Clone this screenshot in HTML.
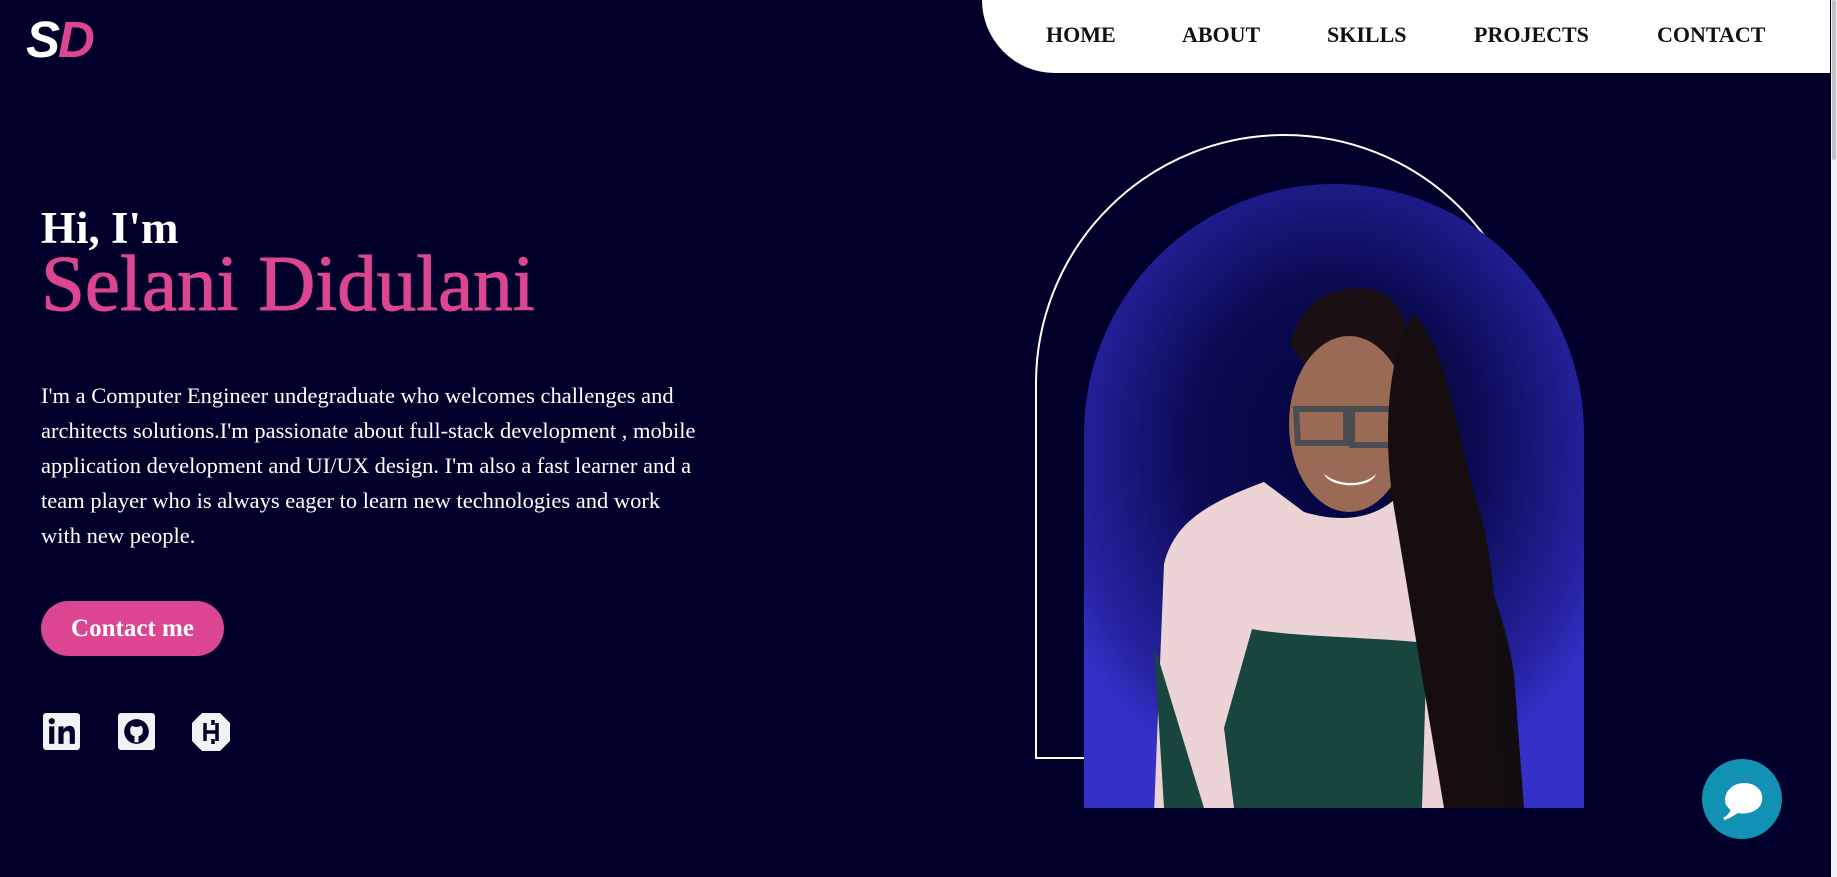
<!DOCTYPE html>
<html><head><meta charset="utf-8"><style>
*{margin:0;padding:0;box-sizing:border-box}
html,body{width:1837px;height:877px;overflow:hidden;background:#00002a;font-family:"Liberation Serif",serif}
.logo{position:absolute;left:26px;top:10px;font-family:"Liberation Sans",sans-serif;font-style:italic;font-weight:bold;font-size:51px;letter-spacing:-2px}
.nav{position:absolute;left:982px;top:0;width:848px;height:73px;background:#fff;border-bottom-left-radius:75px}
.nav span{position:absolute;top:22px;font-weight:bold;font-size:22px;color:#111}
.sb{position:absolute;left:1831px;top:0;width:6px;height:877px;background:#f1f1f1}
.sb i{position:absolute;left:1px;top:0;width:4px;height:160px;background:#c1c1c1;border-radius:2px}
h2{position:absolute;left:41px;top:202px;color:#fff;font-size:45px;font-weight:bold}
h1{position:absolute;left:41px;top:240px;color:#dc4590;font-size:79px;font-weight:normal;white-space:nowrap;-webkit-text-stroke:1px #dc4590}
p{position:absolute;left:41px;top:378px;color:#fff;font-size:22.5px;line-height:35px;white-space:nowrap}
.btn{position:absolute;left:41px;top:601px;width:183px;height:55px;border-radius:28px;background:#dc4590;color:#fff;font-weight:bold;font-size:25px;text-align:center;line-height:55px}
.arch{position:absolute;left:1035px;top:134px;width:499px;height:625px;border:2px solid #fff;border-radius:250px 250px 0 0}
.photo{position:absolute;left:1084px;top:184px;width:500px;height:624px;border-radius:250px 250px 0 0;overflow:hidden;background:radial-gradient(ellipse 62% 58% at 50% 42%,#03043e 0%,#0a0a50 45%,#2622a0 85%,#3431c8 100%)}
.chat{position:absolute;left:1702px;top:759px;width:80px;height:80px;border-radius:50%;background:#1191b4}
</style></head><body>
<div class="logo"><span style="color:#fff">S</span><span style="color:#dc4590">D</span></div>
<div class="nav">
<span style="left:64px">HOME</span><span style="left:200px">ABOUT</span><span style="left:345px">SKILLS</span><span style="left:492px">PROJECTS</span><span style="left:675px">CONTACT</span>
</div>
<div class="sb"><i></i></div>
<h2>Hi, I'm</h2>
<h1>Selani Didulani</h1>
<p>I'm a Computer Engineer undegraduate who welcomes challenges and<br>architects solutions.I'm passionate about full-stack development , mobile<br>application development and UI/UX design. I'm also a fast learner and a<br>team player who is always eager to learn new technologies and work<br>with new people.</p>
<div class="btn">Contact me</div>
<svg style="position:absolute;left:43px;top:713px" width="37" height="37" viewBox="0 0 36 36"><rect x="0" y="0" width="36" height="36" rx="3" fill="#f1f2f6"/><rect x="6" y="13" width="5" height="17" fill="#00002a"/><circle cx="8.5" cy="8" r="3" fill="#00002a"/><path d="M15 13h5v3c1-2 3-3.5 6-3.5 4 0 5 3 5 6.5V30h-5v-9.5c0-2-1-3-2.5-3S20 19 20 21v9h-5z" fill="#00002a"/></svg>
<svg style="position:absolute;left:118px;top:713px" width="37" height="37" viewBox="0 0 36 36"><rect width="36" height="36" rx="3" fill="#f1f2f6"/><circle cx="18" cy="18" r="12" fill="#00002a"/><path d="M13 13c1-1 2 0 3 0.5h4c1-0.5 2-1.5 3-0.5 1 2 1.5 3 1 5 0 3-2 4-4 4.5v6h-4v-6c-2-0.5-4-1.5-4-4.5-0.5-2 0-3 1-5z" fill="#f1f2f6"/></svg>
<svg style="position:absolute;left:192px;top:712px" width="38" height="40" viewBox="0 0 38 40"><path d="M10 1h18l10 10v18L28 39H10L0 29V11z" fill="#f1f2f6"/><path d="M13 11v18M25 11v18M13 20h12M21 8v5M21 27v5" stroke="#00002a" stroke-width="3.5" fill="none"/></svg>
<div class="arch"></div>
<div class="photo">
<svg width="500" height="624" viewBox="0 0 500 624">
<path d="M300 150c20-10 40 20 40 60l30 80c20 80 50 130 60 200l10 134H290L310 200z" fill="#120d10"/>
<path d="M206 160c10-40 40-60 80-55 30 5 40 40 40 70l-6 60c-6 20-30 20-56 10z" fill="#1a1014"/>
<ellipse cx="265" cy="240" rx="60" ry="88" fill="#9b6a55"/>
<path d="M212 225h50v34h-48zM268 225h54l-4 36h-50z" fill="none" stroke="#4a4d52" stroke-width="6"/>
<path d="M240 290c15 12 40 12 52 0c-5 15-45 15-52 0z" fill="#fff"/>
<path d="M70 630 L80 380c10-40 40-60 100-82l40 30c40 12 70 5 90-12l30 160 30 160z" fill="#ecd4d6"/>
<path d="M168 445c40 8 120 8 175 14l-5 165H150l-10-80z" fill="#18463e"/>
<path d="M70 460l10 164h40z" fill="#18463e"/>
<path d="M330 130c30 30 40 100 60 180 30 80 20 200 30 314h-60l-50-300c-10-60-10-150 20-194z" fill="#150d10"/>
</svg>
</div>
<div class="chat"><svg width="80" height="80" viewBox="0 0 80 80"><path d="M24 46c-4-12 6-22 18-22s20 8 18 18c-2 10-14 14-24 12l-10 6 3-8z" fill="#fff"/><path d="M30 52c-2 4-4 6-8 8" stroke="#fff" stroke-width="3" fill="none"/></svg></div>
</body></html>
